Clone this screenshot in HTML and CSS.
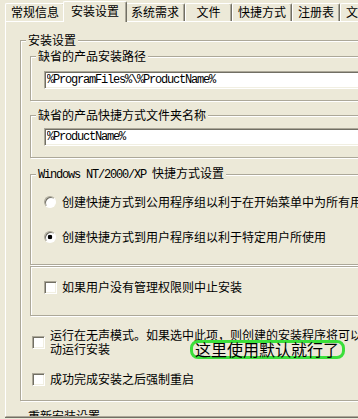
FILE: index.html
```html
<!DOCTYPE html>
<html lang="zh-CN">
<head>
<meta charset="utf-8">
<title>安装设置</title>
<link rel="stylesheet" href="styles.css">
</head>
<body>
<div class="tabs">
  <div class="tab">常规信息</div>
  <div class="tab active">安装设置</div>
  <div class="tab">系统需求</div>
  <div class="tab tab-narrow">文件</div>
  <div class="tab">快捷方式</div>
  <div class="tab">注册表</div>
  <div class="tab">文件关联</div>
</div>
<div class="panel">
  <fieldset class="group outer">
    <legend>安装设置</legend>
    <fieldset class="group g1">
      <legend>缺省的产品安装路径</legend>
      <input class="edit" type="text" value="%ProgramFiles%\%ProductName%" readonly>
    </fieldset>
    <fieldset class="group g2">
      <legend>缺省的产品快捷方式文件夹名称</legend>
      <input class="edit" type="text" value="%ProductName%" readonly>
    </fieldset>
    <fieldset class="group g3">
      <legend><span class="mono">Windows NT/2000/XP </span>快捷方式设置</legend>
      <div class="opt">
        <span class="radio"></span>
        <span class="opt-text">创建快捷方式到公用程序组以利于在开始菜单中为所有用户使用</span>
      </div>
      <div class="opt opt-second">
        <span class="radio checked"></span>
        <span class="opt-text">创建快捷方式到用户程序组以利于特定用户所使用</span>
      </div>
    </fieldset>
    <fieldset class="group g4">
      <div class="opt">
        <span class="check"></span>
        <span class="opt-text">如果用户没有管理权限则中止安装</span>
      </div>
    </fieldset>
    <div class="opt opt-top silent">
      <span class="check"></span>
      <span class="opt-text wrap">运行在无声模式。如果选中此项，则创建的安装程序将可以自动运行安装</span>
    </div>
    <div class="opt opt-top restart">
      <span class="check"></span>
      <span class="opt-text">成功完成安装之后强制重启</span>
    </div>
  </fieldset>
  <fieldset class="group outer outer2">
    <legend>重新安装设置</legend>
    <div class="filler"></div>
  </fieldset>
</div>
<div class="note">这里使用默认就行了</div>
</body>
</html>
```
FILE: styles.css
```css
html, body {
  margin: 0;
  padding: 0;
}
body {
  width: 358px;
  height: 419px;
  overflow: hidden;
  position: relative;
  background: #ECE9D8;
  color: #000;
  font-family: "Noto Sans CJK SC", sans-serif;
  font-size: 12px;
  line-height: 14px;
}

/* ---------- tabs ---------- */
.tabs {
  display: flex;
  align-items: flex-end;
  height: 21px;
  padding-left: 5px;
  white-space: nowrap;
}
.tab {
  flex-shrink: 0;
  box-sizing: border-box;
  height: 18px;
  padding: 0 5px;
  line-height: 16px;
  border-top: 1px solid #fff;
  border-left: 1px solid #fff;
  border-right: 1px solid #716F64;
  box-shadow: inset -1px 0 #ACA899;
  border-radius: 2px 2px 0 0;
  background: #ECE9D8;
}
.tab-narrow {
  min-width: 47px;
  text-align: center;
}
.tab.active {
  position: relative;
  z-index: 1;
  height: 21px;
  margin: 0 -2px -1px;
  padding: 0 7px;
  line-height: 17px;
}

/* ---------- panel ---------- */
.panel {
  box-sizing: border-box;
  width: 420px;
  height: 396px;
  margin-left: 5px;
  border-top: 1px solid #fff;
  border-left: 1px solid #fff;
  border-bottom: 1px solid #ACA899;
  box-shadow: 0 1px #716F64;
  overflow: hidden;
}

/* ---------- group boxes ---------- */
.group {
  margin: 0;
  padding: 0 0 0 5px;
  border: 1px solid #ACA899;
  box-shadow: inset 1px 1px #fff, 1px 1px #fff;
  min-inline-size: 0;
}
.group legend {
  padding: 0 2px;
  line-height: 14px;
  background: #ECE9D8;
}
.outer {
  margin: 11px 0 0 14px;
  padding: 2px 0 14px 5px;
}
.outer2 {
  margin-top: 8px;
  padding-bottom: 20px;
}
.filler {
  height: 20px;
}
.g1, .g2, .g3, .g4 {
  margin-left: 4px;
}
.g1 {
  padding-top: 8px;
  padding-bottom: 11px;
}
.g2 {
  margin-top: 7px;
  padding-top: 6px;
  padding-bottom: 11px;
}
.g3 {
  margin-top: 8px;
  padding-top: 13px;
  padding-bottom: 20px;
}
.g4 {
  margin-top: 1px;
  padding-top: 13px;
  padding-bottom: 21px;
}

.mono {
  font-family: "Liberation Mono", monospace;
  font-size: 12px;
  letter-spacing: -1.2px;
  white-space: pre;
}

/* ---------- edit boxes ---------- */
.edit {
  display: block;
  box-sizing: border-box;
  width: 330px;
  height: 18px;
  margin: 0 0 0 8px;
  padding: 0 2px;
  border: 1px solid;
  border-color: #ACA899 #fff #fff #ACA899;
  box-shadow: inset 1px 1px #716F64, inset -1px -1px #F1EFE2;
  background: #fff;
  color: #000;
  font-family: "Liberation Mono", monospace;
  font-size: 12px;
  letter-spacing: -1.2px;
  line-height: 14px;
  outline: none;
}

/* ---------- options ---------- */
.opt {
  display: flex;
  align-items: center;
  margin-left: 8px;
  white-space: nowrap;
}
.opt-second {
  margin-top: 21px;
}
.opt-text {
  line-height: 14px;
}
.opt-top {
  margin-left: 6px;
}
.silent {
  margin-top: 12px;
}
.restart {
  margin-top: 16px;
}
.wrap {
  width: 324px;
  white-space: normal;
  flex-shrink: 0;
}
.radio {
  flex-shrink: 0;
  box-sizing: border-box;
  width: 12px;
  height: 12px;
  margin-right: 6px;
  border-radius: 50%;
  border: 1px solid;
  border-color: #ACA899 #fff #fff #ACA899;
  box-shadow: inset 1px 1px #716F64;
  background: #fff;
}
.radio.checked {
  background: radial-gradient(circle at 50% 50%, #000 0, #000 2px, #fff 2.6px);
}
.check {
  flex-shrink: 0;
  box-sizing: border-box;
  width: 13px;
  height: 13px;
  margin-right: 5px;
  border: 1px solid;
  border-color: #ACA899 #fff #fff #ACA899;
  box-shadow: inset 1px 1px #716F64, inset -1px -1px #F1EFE2;
  background: #fff;
}

/* ---------- annotation ---------- */
.note {
  position: absolute;
  left: 190px;
  top: 340px;
  box-sizing: border-box;
  width: 155px;
  height: 19px;
  padding-left: 2px;
  border: 3px solid #3ADF3A;
  border-radius: 8px;
  font-size: 16px;
  line-height: 13px;
  white-space: nowrap;
}
```
